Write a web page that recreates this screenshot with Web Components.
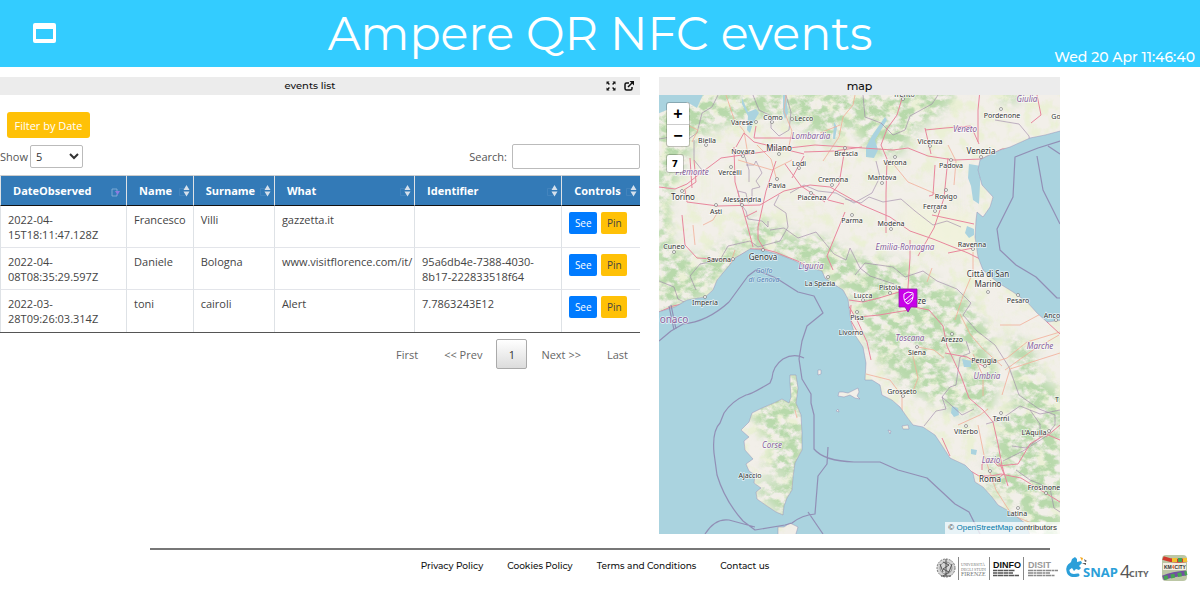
<!DOCTYPE html>
<html lang="en">
<head>
<meta charset="utf-8">
<title>Ampere QR NFC events</title>
<style>
  body { margin: 0; background: #fff; font-family: "Open Sans", "Noto Sans", sans-serif; color: #444; }
</style>
</head>
<body>
<dashboard-page></dashboard-page>

<template id="t-page">
  <style>
    :host { display: block; }
    main { display: grid; grid-template-columns: 640fr 401fr 121fr; column-gap: 19px; padding-top: 10px; }
  </style>
  <dashboard-header><span slot="title">Ampere QR NFC events</span><time slot="time">Wed 20 Apr 11:46:40</time></dashboard-header>
  <main>
    <dashboard-widget label="events list" tools><events-table></events-table></dashboard-widget>
    <dashboard-widget label="map"><events-map></events-map></dashboard-widget>
  </main>
  <dashboard-footer></dashboard-footer>
</template>

<template id="t-header">
  <style>
    :host { display: grid; grid-template-columns: 1fr auto 1fr; height: 67px; background: #3cf; color: #fff; font-family: Montserrat, Inter, sans-serif; }
    button { justify-self: start; align-self: center; margin: 0 0 2px 32px; border: 0; padding: 0; background: none; line-height: 0; }
    h1 { margin: 0; font-weight: 400; font-size: 46px; line-height: 67px; white-space: nowrap; }
    .time { justify-self: end; align-self: end; padding-right: 5px; font-size: 14px; line-height: 20px; font-weight: 500; }
  </style>
  <button aria-label="Toggle header"><svg width="25" height="22"><path fill="#fff" fill-rule="evenodd" d="M3 1h19a2 2 0 0 1 2 2v16a2 2 0 0 1-2 2H3a2 2 0 0 1-2-2V3a2 2 0 0 1 2-2zM4 7v10h17V7z"/></svg></button>
  <h1><slot name="title"></slot></h1>
  <div class="time"><slot name="time"></slot></div>
</template>

<template id="t-widget">
  <style>
    :host { display: block; min-width: 0; }
    header { display: flex; align-items: center; height: 18px; background: #ececec; color: #111; }
    h2 { flex: 1; margin: 0; text-align: center; font: 500 11px/18px Montserrat, Inter, sans-serif; }
    :host([tools]) h2 { padding-left: 14px; font-size: 10px; }
    .tools { display: flex; gap: 8px; justify-content: flex-end; padding-right: 6px; }
    .tools[hidden] { display: none; }
    button { border: 0; padding: 0; background: none; line-height: 0; }
  </style>
  <header><h2></h2>
    <div class="tools">
      <button aria-label="Full screen"><svg width="10" height="10" viewBox="0 0 10 10"><path fill="#111" d="M.5.500h3L2.500 1.500 3.900 2.900 2.900 3.900 1.500 2.500.5 3.500zM9.500.500v3L8.500 2.500 7.100 3.900 6.100 2.900 7.500 1.500 6.500.500zM.5 9.500v-3l1 1L2.900 6.100 3.900 7.100 2.500 8.500l1 1zM9.500 9.500h-3l1-1L6.100 7.100 7.100 6.100 8.500 7.500l1-1z"/></svg></button>
      <button aria-label="Open in new tab"><svg width="10" height="10" viewBox="0 0 10 10"><path fill="none" stroke="#111" stroke-width="1.500" d="M5 2H2.500Q1 2 1 3.500V7.500Q1 9 2.500 9H6.500Q8 9 8 7.500V6M4 6l4-4"/><path fill="#111" d="M5.500 0H10v4.500z"/></svg></button>
    </div>
  </header>
  <slot></slot>
</template>

<template id="t-table">
  <style>
    :host { display: block; font-size: 11px; line-height: 15px; padding-top: 17px; }
    button, input, select { font: inherit; box-sizing: border-box; }
    .filter { display: block; margin-left: 7px; height: 26px; width: 83px; padding: 0; border: 0; border-radius: 3px; background: #ffc107; color: #fff; }
    .bar { display: flex; justify-content: space-between; margin: 6px 0; height: 25px; color: #555; }
    .bar div { display: flex; align-items: center; gap: 2px; }
    .bar div.search { gap: 5px; }
    select { width: 53px; height: 23px; border: 1px solid #bbb; border-radius: 2px; background: #fff; color: #333; padding-left: 1px; }
    input { width: 128px; height: 25px; border: 1px solid #bbb; border-radius: 2px; background: #fff; }
    table { width: 100%; border-collapse: separate; border-spacing: 0; table-layout: fixed; border-bottom: 1px solid #555; }
    th, td { box-sizing: border-box; border-left: 1px solid #dee2e6; text-align: left; }
    th { height: 31px; padding: 0 6px 0 12px; background: #337ab7; color: #fff; border-top: 1px solid #ccc; border-bottom: 1px solid #111; white-space: nowrap; }
    th span { display: flex; align-items: center; justify-content: space-between; }
    th:nth-child(n+2) { padding-right: 3px; }
    td { height: 42px; padding: 6px 6px 5px 7px; vertical-align: top; border-bottom: 1px solid #e3e5ea; }
    tr:last-child td { border-bottom: 0; }
    td.one { white-space: nowrap; }
    td .acts { display: flex; gap: 4px; }
    td button { height: 22px; border: 0; border-radius: 2px; padding: 0; font-size: 10px; }
    .see { width: 28px; background: #007bff; color: #fff; }
    .pin { width: 26px; background: #ffc107; color: #444; }
    nav { display: flex; align-items: center; justify-content: flex-end; padding-top: 6px; gap: 2px; }
    nav button { height: 30px; padding: 0 12px; border: 0; background: none; color: #666; }
    nav .on { width: 31px; padding: 0; border: 1px solid #aaa; border-radius: 2px; background: linear-gradient(#fff, #dcdcdc); color: #333; }
  </style>
  <button class="filter">Filter by Date</button>
  <div class="bar">
    <div><label for="len">Show</label><select id="len"><option>5</option><option>10</option></select></div>
    <div class="search"><label for="q">Search:</label><input id="q" type="search"></div>
  </div>
  <table>
    <colgroup><col style="width:19.700%"><col style="width:10.400%"><col style="width:12.700%"><col style="width:21.900%"><col style="width:23%"><col></colgroup>
    <thead><tr></tr></thead><tbody></tbody>
  </table>
  <nav aria-label="Pages"><button>First</button><button>&lt;&lt; Prev</button><button class="on">1</button><button>Next &gt;&gt;</button><button>Last</button></nav>
</template>

<template id="t-map">
  <style>
    :host { display: block; position: relative; aspect-ratio: 401 / 439; overflow: hidden; background: #aad3df; }
    svg.m { display: block; width: 100%; height: 100%; }
    text { font-family: "Noto Sans", sans-serif; text-anchor: middle; font-size: 7px; fill: #333; paint-order: stroke; stroke: #fff; stroke-opacity: .7; stroke-width: 1.500px; }
    text.big { font-size: 8px; }
    text.reg { font-size: 8px; font-style: italic; fill: #86609c; }
    text.land { font-size: 10px; fill: #86609c; }
    text.sea { font-style: italic; fill: #5b83b8; stroke-opacity: .3; }
    .zoom { position: absolute; left: 8px; top: 8px; width: 22px; box-shadow: 0 0 0 1px #0003; border-radius: 2px; background: #fff; }
    .zoom button { display: block; width: 22px; height: 21px; padding: 0; border: 0; background: none; font: bold 16px/21px "Liberation Sans", sans-serif; color: #000; }
    .zoom button + button { border-top: 1px solid #ccc; height: 22px; }
    .level { position: absolute; left: 8px; top: 60px; width: 16px; height: 17px; box-shadow: 0 0 0 1px #0003; border-radius: 2px; background: #fff; font: bold 9px/19px "DejaVu Sans", sans-serif; text-align: center; color: #000; }
    .attr { position: absolute; right: 0; bottom: 0; height: 12px; padding: 0 3px; background: #fffb; font: 8px/12px "Liberation Sans", sans-serif; color: #333; white-space: nowrap; }
    .attr a { color: #0078a8; text-decoration: none; }
  </style>
  <svg class="m" viewBox="659 95 401 439" preserveAspectRatio="xMidYMid slice" role="img" aria-label="Map of northern Italy">
    <defs>
      <path id="coast" d="M655 90H1064V130L1045 135 1030 138 1010 147 1000 150 985 157 980 160 978 170 982 185 993 197 990 207 983 217 977 212 976 220 975 237 978 257 983 270 997 282 1013 292 1027 302 1037 313 1047 322 1064 320V540H1032L1025 523 1017 517 1007 510 998 505 992 497 983 487 975 482 973 473 965 465 950 458 943 447 935 435 923 427 913 425 907 417 900 407 892 400 882 395 880 385 872 380 865 380 866 363 863 347 855 335 851 322 849 307 848 299 843 290 832 283 825 278 822 271 807 267 793 260 780 255 763 250 750 249 735 258 728 267 717 280 713 290 705 297 687 300 675 307 655 313z"/>
      <path id="isles" d="M790 375l6 0 2 13-2 15 5 12 1 18 0 17-7 13-2 14-1 13-5 8-3 8-1 9-7-3-9-6-10-7-1-7 5-4-7-5 1-8-6-4-3-7 7-5-8-9-1-9 5-4-8-7 8-8 3-9 10-5 12-5 8-4 7 4 2-6-1-14zM839 392l4 0 5 1 4-2 6-3 1 4-2 4 3 3-5-1-5-3-6 2-6-1zM818 370l3 0 0 4-3 1zM902 426l6-1 1 4-6 0zM888 430l3 1-1 3zM778 527l6 0 6-4 8 4-3 10-17 0zM836 411l2-2 1 3z"/>
      <clipPath id="land"><use href="#coast"/><use href="#isles"/></clipPath>
      <filter id="wood" x="659" y="95" width="401" height="439" filterUnits="userSpaceOnUse" color-interpolation-filters="sRGB">
        <feGaussianBlur in="SourceGraphic" stdDeviation="6" result="zone"/>
        <feTurbulence type="fractalNoise" baseFrequency=".09 .12" numOctaves="6" seed="21"/>
        <feColorMatrix values="0 0 0 0 .72  0 0 0 0 .85  0 0 0 0 .67  4 0 0 0 -1.500"/>
        <feComposite operator="in" in2="zone"/>
      </filter>
      <filter id="field" x="659" y="95" width="401" height="439" filterUnits="userSpaceOnUse" color-interpolation-filters="sRGB">
        <feTurbulence type="fractalNoise" baseFrequency=".08" numOctaves="5" seed="3"/>
        <feColorMatrix values="0 0 0 0 .92  0 0 0 0 .94  0 0 0 0 .84  4 0 0 0 -1.800"/>
      </filter>
      <filter id="soft"><feGaussianBlur stdDeviation="6"/></filter>
    </defs>
    <g clip-path="url(#land)">
      <rect x="655" y="90" width="410" height="450" fill="#f2efe9"/>
      <rect x="655" y="90" width="410" height="450" filter="url(#field)"/>
      <g filter="url(#wood)">
        <path d="M655 90H960L945 110 915 130 900 155 875 155 850 125 835 145 805 130 785 115 750 120 725 125 700 135 685 160 668 200 672 250 700 258 735 240 755 215 790 235 830 240 850 255 900 262 930 280 965 295 980 320 995 335 985 350 1000 380 990 410 960 415 930 400 900 385 870 350 855 300 820 275 790 262 745 245 725 275 700 300 655 315z"/>
        <path d="M1010 330l20 15 10 30 24 20V540H1035L1010 500 980 490 990 450 1000 430 1015 400z"/>
        <path d="M740 400l65-30v140l-20 10-30-30 20-40zM1000 90h20v12h-20z"/>
      </g>
      <g filter="url(#soft)" fill="#f2efe9" opacity=".6"><path d="M700 150L800 150 850 185 900 180 960 170V240L900 235 820 205 760 205 700 215z"/><path d="M965 455l30 15v25l-20-15zM945 350l20 0 0 30-15 0zM1000 300l60 30v20l-60-20zM755 470h30v16h-30z"/></g>
      <path filter="url(#soft)" fill="#f1f3da" opacity=".8" d="M905 205l70 10v45l-40-10-30-20z"/>
      <path fill="#aad3df" d="M655 90h50l-8 18-10-6-8 12-10-5-14 6zM742 98l6 14 8-3 3 4-6 10-3 10-3-3 1-14-6-12zM783 95h3l2 18-3 6-2-6zM834 122l3 5-2 12h-2zM885 117l2 3-12 20 3 10-4 8-8-1 0-10 7-13zM969 164l12 2-2 38-6-4-2-14-3-8zM1029 154l18-2 13 3v9l-26-5zM967 226l7 3 0 6-5 3-4-5zM962 359l9 2 0 6-7 0zM952 406l6 2 1 7-5 2-3-4zM971 449l6 1-1 5-5-1z"/>
      <g fill="none" stroke="#9b83a5" stroke-opacity=".6" stroke-width="1" stroke-linejoin="round">
        <path d="M659 139l12-2 12 6 14-10 5-20 10-6 6-12M751 90l8 20 12 6 0 12 8 8 10-6 2-18-6-20M694 140l0 20 8 10M745 157l4 13 0 12M746 165l8 0 2-4 6 12-6 8 4 6-8 2 0 12-4 2-2-10-8-2 2 12 6 8 2 8 14 2 6 6 0-6M779 195l-5 10 12 8 2 14-8 14-22 6-8-6-22 5-8 14-20 4-10 12 6 14M770 230l14-2 14 10 18-6 18 22 12 6 4-12 10 20 10 8 24 8M790 193l14-8 14 6 18 2 18 10 18-10 8-16-4-16M845 199l16 4 8-6 14 5 18-3 14 12 18 14 14-4 14 6M863 95l2 22 16 6 12 12 12-5 5-14 22-12 8-12M995 120l24 4 10 12 2 18M690 305l-12-6-4-12-15-6M855 275l10-12 28 4 12 10 18-6 14 10 20 8 14 14-8 12 14 16 18 14 14 22 10 28 20 14 16 6 0 10-10 12-22 14-20 10"/>
        <path d="M924 426l12-15 10-2-4-12 8-10 6-2 4-28 10-4-4-12M942 397l20 18 12-6M1060 410l-20 4-20-8-20 14-14 4M1030 410l10 14 0 14-14 10-14-2M1016 470l14 10 20 8 4 20 6 4"/>
      </g>
      <g fill="none" stroke="#f3ad98" stroke-width=".8" stroke-linejoin="round">
        <path d="M726 95l8 24 10 12 4 24M786 95l-2 16 8 20-4 20M855 95l-2 10-10 12-4 20-16 24M757 145l14 14 6 22M738 160l34 10 20-10M719 210l-6 10-10 5M890 160l18 22 28 12M948 145l8 16-2 24M973 252l0 20-10 24-8 24M960 314l10 20 12 14 20 18M983 396l0-20-10-22M985 365l22-7 20-16 33-10M1005 370l28-20 26-15M866 374l24 6 12 16 0 20M912 352l6 26-6 16M918 347l16 3 10 8M958 425l22-10 8-6M978 425l6 30 12 35 16 25 24 10M1060 353l-50 16-8 26M1000 325l20 0 30-16M820 133l20-8M676 120l22 10-6 12M693 225l2 20M735 250l-6 18M932 268l-5 14M795 410l2 8"/>
      </g>
      <g fill="none" stroke="#e8869c" stroke-width="1" stroke-linejoin="round">
        <path d="M659 187l16 2 12-5 10-8 24-18 28-4 40-6 26-3 48 3 30 2 15-2 20 8 26 4 28-1 20-10 12 0 20 9 26-4 20-18 34-20 40-8 34 7"/>
        <path d="M682 215l3 30 12 13 35 2 14-8M690 158l2 30M685 190l2 12 31 4 42-1 24-14 26-6 20 2 32 18 28 12 20 14 23 8 35 14 20 10 18 12 30 18M684 190l12-8-2-22"/>
        <path d="M736 147l8-14 10 9 50 12M734 147l1 35 12 42 6 23M776 161l-10 30-8 36 0 12 6 10M745 217l12-6M804 156l-12 22M804 152l30-1 28-4M845 148l-6 36-12 16M785 164l16 22 24 16M756 126l-2 12 40 0"/>
        <path d="M903 95l-6 20-10 14-6 16 6 14-1 34 0 40M935 165l-2 30-4 1M931 154l-6-26M925 130l20-2 26-2 8 18M980 90l-2 20 0 32M948 158l-4 40-10 30-16 28M973 248l-25 5M932 215l42 9M1037 95l4 20-10 8"/>
        <path d="M750 249l13 0 12 3 25 10 25 16 20 22 12 20 10 22 4 18M849 300l14 2 16-4 20-6 10 14 20 4 14 16 4 20 14 30 8 22 14 12 10 12 5 22 4 22 6 20M851 305l-1 14 8 14M910 240l0 18-3 44M909 310l-30 5-20 2M945 353l22 4 18 10M949 458l30 18 12 0 10-2 20 4 39 24M992 460l6 6 20-2 12-20 16-10 14 6M982 470l0-6 8-4 10 4 4 10-12 8-8-6M950 456l-8-18M1027 300l20 22 13 12M828 200l16 4M845 212l-18 44 6 14M659 312l14-6 18-4M1060 425l-14 12"/>
      </g>
    </g>
    <g fill="none" stroke="#8d83ae" stroke-width="1.200" stroke-opacity=".85" stroke-linejoin="round">
      <path d="M729 302l19-26 8-6 20 8 22 14 16 4 9 17-16 13-5 15-3 18 3 20 9 15 0 9 3 12 0 34q10 12 40 13h26l18 8 29 8 28 26 14 8 12 24M804 358q-10-5-21 1-10 7-11 19l-2 5q-20 12-24 12-14 6-22 18l-4 10q-8 8-6 30l3 22q8 26 26 46l12 9 30-5 7-2q10-8 23-9l3-38 9-12 1-17M705 534q10-16 24-14l26 7M808 512l15 22M659 341l12-10 12-7q24-2 46-22M1060 141l-22 7-23 9-2 40-16 32 3 21 16 15 20 12 21 21h4M1037 156l6 34 17 34M1048 146l12 8M669 306l5 24M671 305l5 24"/>
      <use href="#coast" stroke-width=".6" stroke-opacity=".7"/><use href="#isles" stroke-width=".6" stroke-opacity=".7"/>
    </g>
    <g id="labels"></g>
    <g><path fill="#c800e8" stroke="#8a1ba2" stroke-width=".8" d="M899 289h18v18h-6l-3 5-3-5h-6z"/><path fill="none" stroke="#fff" stroke-width="1" d="M904 294l4-2 5 1q1 8-5 11-5-2-4-10zM905 300l7-6M906 303l7-6"/></g>
  </svg>
  <div class="zoom"><button aria-label="Zoom in">+</button><button aria-label="Zoom out">−</button></div>
  <div class="level">7</div>
  <div class="attr">© <a href="#">OpenStreetMap</a> contributors</div>
</template>

<template id="t-footer">
  <style>
    :host { display: block; padding-top: 14px; }
    hr { width: 75%; height: 0; margin: 0 auto; border: 0; border-top: 2px solid #777; }
    .row { display: grid; grid-template-columns: 1fr auto 1fr; align-items: start; padding: 2px 10px 0 0; }
    nav { display: flex; gap: 24px; grid-column: 2; padding-top: 6px; font: 500 9px/16px Montserrat, Inter, sans-serif; }
    a { color: #111; text-decoration: none; }
    .logos { justify-self: end; line-height: 0; }
  </style>
  <hr>
  <div class="row">
    <nav><a href="#">Privacy Policy</a><a href="#">Cookies Policy</a><a href="#">Terms and Conditions</a><a href="#">Contact us</a></nav>
    <div class="logos">
      <svg width="254" height="32" viewBox="936 551 254 32">
        <g fill="none" stroke="#777"><circle cx="946" cy="567" r="9" fill="#d5d5d5" stroke-dasharray="2 1"/><circle cx="946" cy="567" r="6" stroke-width=".7"/><path stroke="#555" d="M946 558v17M943 561l6 3-6 4 6 3-6 4M941 575h10M940 563l3 8M952 563l-3 8"/><path stroke="#888" d="M958.500 556v23M989.500 556v23M1023.500 556v23"/></g>
        <g font-family="'Liberation Serif', serif" fill="#777"><text x="961" y="565" font-size="4">UNIVERSITÀ</text><text x="961" y="570" font-size="4">DEGLI STUDI</text><text x="961" y="575" font-size="6">FIRENZE</text></g>
        <g font-family="'Liberation Sans', sans-serif" font-weight="bold"><text x="993" y="567" font-size="9" fill="#111">DINFO</text><text x="1028" y="567" font-size="9" fill="#999">DISIT</text></g>
        <path stroke="#555" stroke-width="1.500" stroke-dasharray="4 .5 6 .5" d="M993 569.500h22M993 572h20M993 574.500h26"/><path stroke="#888" stroke-width="1.500" stroke-dasharray="5 .5 3 .5" d="M1028 569.500h30M1028 572h22M1028 574.500h27"/>
        <path fill="none" stroke="#2b9fd9" stroke-width="3" stroke-linecap="round" d="M1078 574q-9 2-10-4-1-5 3-7"/><path fill="#2b9fd9" d="M1069 564l2-3 1-3 3-2 2 2 0 3 4-1 1 2-3 3 2 2-2 2-3-1-2 2-2-3-3 2z"/><path fill="#f6a81c" d="M1080 556l3 1-1 3z"/><path fill="#555" d="M1084 558l3 2-2 1zM1082 562l4 0 0 2z"/>
        <g font-family="'Open Sans', sans-serif"><text x="1083" y="576" font-size="13" font-weight="bold" fill="#2b9fd9">SNAP</text><text x="1120" y="577" font-size="18" fill="#555">4</text><text x="1129" y="576" font-size="9" font-weight="bold" fill="#666">CITY</text></g>
        <rect x="1162" y="554" width="25" height="26" rx="4" fill="#bcc7a5"/><path fill="none" stroke="#d13a2e" stroke-width="4" d="M1163 557q10 4 24 2"/><path fill="none" stroke="#f2c230" stroke-width="4" d="M1172 559l5 0M1183 559h4"/><path stroke="#45a551" stroke-width="4" d="M1178 559h4"/><path fill="none" stroke="#7250a0" stroke-width="5" d="M1163 577q10-4 23-5"/><path stroke="#45a551" stroke-width="4" stroke-dasharray="4 3" d="M1164 577l23-5"/>
        <rect x="1163" y="562" width="23" height="7" fill="#f4efe2"/><text x="1164" y="568" font-family="'Liberation Sans', sans-serif" font-weight="bold" font-size="5" fill="#333">KM<tspan fill="#e35b29">4</tspan>CITY</text>
      </svg>
    </div>
  </div>
</template>

<script>
const stamp = (host, id) => {
  const root = host.attachShadow({ mode: 'open' });
  root.append(document.getElementById(id).content.cloneNode(true));
  return root;
};

customElements.define('dashboard-header', class extends HTMLElement {
  constructor() { super(); stamp(this, 't-header'); }
});

customElements.define('dashboard-widget', class extends HTMLElement {
  connectedCallback() {
    if (this.shadowRoot) return;
    const root = stamp(this, 't-widget');
    root.querySelector('h2').textContent = this.getAttribute('label');
    root.querySelector('.tools').hidden = !this.hasAttribute('tools');
  }
});

const COLUMNS = ['DateObserved', 'Name', 'Surname', 'What', 'Identifier', 'Controls'];
const EVENTS = [
  ['2022-04-15T18:11:47.128Z', 'Francesco', 'Villi', 'gazzetta.it', ''],
  ['2022-04-08T08:35:29.597Z', 'Daniele', 'Bologna', 'www.visitflorence.com/it/', '95a6db4e-7388-4030-8b17-222833518f64'],
  ['2022-03-28T09:26:03.314Z', 'toni', 'cairoli', 'Alert', '7.7863243E12'],
];

customElements.define('events-table', class extends HTMLElement {
  constructor() {
    super();
    const root = stamp(this, 't-table');
    const both = '<svg width="11" height="12" viewBox="0 0 11 12"><path fill="none" stroke="#4a88c0" stroke-width=".7" d="M6 3.500H.5v7H6"/><path fill="#d5e0ec" d="M7.500 0l3 5h-6zM4.500 6.500h6l-3 5z"/></svg>';
    const down = '<svg width="9" height="12" viewBox="0 0 9 12"><path fill="none" stroke="#8db5dc" stroke-width=".8" d="M6 4H1v7h5V9M6 4v2"/><path fill="#8d7be0" d="M4 6h5L6.500 10z"/></svg>';
    root.querySelector('thead tr').innerHTML = COLUMNS.map((c, i) =>
      `<th scope="col"><span>${c}${i ? both : down}</span></th>`).join('');
    root.querySelector('tbody').innerHTML = EVENTS.map(r => '<tr>' +
      r.map((v, i) => `<td${i === 3 ? ' class="one"' : ''}>${v}</td>`).join('') +
      '<td><div class="acts"><button class="see">See</button><button class="pin">Pin</button></div></td></tr>').join('');
  }
});

// Label: name, centre x, baseline y, class, town marker x, town marker y
const PLACES = [
  ['Varese', 742, 125, '', 756, 122], ['Como', 773, 120, '', 772, 122], ['Lecco', 804, 121, '', 792, 119],
  ['Biella', 707, 143, '', 706, 145], ['Novara', 743, 154, '', 743, 156], ['Milano', 779, 151, 'big', 779, 154],
  ['Lombardia', 811, 139, 'reg'], ['Brescia', 846, 156, '', 845, 148], ['Lodi', 799, 166, '', 799, 168],
  ['Vercelli', 730, 175, '', 731, 167], ['Pavia', 777, 188, '', 777, 179], ['Cremona', 833, 182, '', 832, 185],
  ['Piemonte', 692, 175, 'reg'], ['Torino', 683, 200, 'big', 682, 191], ['Alessandria', 742, 202, '', 742, 205],
  ['Piacenza', 812, 200, '', 811, 193], ['Asti', 716, 214, '', 716, 205], ['Cuneo', 674, 249, '', 674, 252],
  ['Savona', 719, 262, '', 733, 259], ['Genova', 763, 260, 'big', 763, 250], ['Liguria', 811, 269, 'reg'],
  ['Golfo', 764, 273, 'sea'], ['di Genova', 764, 282, 'sea'], ['La Spezia', 820, 286, '', 828, 277],
  ['Imperia', 705, 305, '', 705, 297], ['onaco', 674, 323, 'land'], ['Parma', 852, 223, '', 852, 215],
  ['Trento', 904, 97, '', 903, 99], ['Giulia', 1027, 102, 'reg'], ['Pordenone', 1002, 118, '', 1001, 109],
  ['Go', 1056, 119, ''], ['Veneto', 965, 132, 'reg'], ['Vicenza', 930, 144, '', 930, 146],
  ['Venezia', 981, 154, 'big', 981, 157], ['Verona', 895, 165, '', 895, 157], ['Padova', 951, 168, '', 951, 160],
  ['Mantova', 882, 180, '', 882, 183], ['Rovigo', 946, 199, '', 946, 190], ['Ferrara', 935, 209, '', 935, 211],
  ['Modena', 891, 226, '', 891, 229], ['Emilia-Romagna', 905, 250, 'reg'], ['Ravenna', 972, 247, '', 973, 249],
  ['Città di San', 988, 277, 'big'], ['Marino', 988, 287, 'big', 988, 292], ['Pistoia', 890, 290, '', 890, 293],
  ['Lucca', 863, 298, '', 863, 300], ['ze', 922, 304, 'big'], ['Pesaro', 1018, 303, '', 1018, 295],
  ['Pisa', 857, 320, '', 857, 312], ['Livorno', 851, 335, ''], ['Anco', 1052, 318, '', 1056, 320],
  ['Toscana', 910, 341, 'reg'], ['Arezzo', 952, 342, '', 952, 334], ['Siena', 917, 355, '', 917, 347],
  ['Marche', 1040, 349, 'reg'], ['Perugia', 984, 363, '', 985, 366], ['Umbria', 987, 379, 'reg'],
  ['Grosseto', 902, 394, '', 903, 396], ['Corse', 772, 448, 'reg'], ['Ajaccio', 750, 478, ''],
  ['Terni', 1001, 421, '', 1001, 413], ['Viterbo', 966, 434, '', 966, 426], ["L'Aquila", 1034, 435, '', 1049, 431],
  ['T', 1057, 402, ''], ['Lazio', 991, 463, 'reg'], ['Roma', 990, 482, 'big', 990, 471],
  ['Frosinone', 1044, 490, '', 1046, 493], ['Latina', 1017, 516, '', 1018, 508],
];

customElements.define('events-map', class extends HTMLElement {
  constructor() {
    super();
    const root = stamp(this, 't-map');
    root.getElementById('labels').innerHTML = PLACES.map(([name, x, y, cls, tx, ty]) =>
      (tx ? `<circle cx="${tx}" cy="${ty}" r="1.500" fill="#fff" stroke="#666" stroke-width=".6"/>` : '') +
      `<text x="${x}" y="${y}" class="${cls}">${name}</text>`).join('');
  }
});

customElements.define('dashboard-footer', class extends HTMLElement {
  constructor() { super(); stamp(this, 't-footer'); }
});

customElements.define('dashboard-page', class extends HTMLElement {
  constructor() { super(); stamp(this, 't-page'); }
});
</script>
</body>
</html>
